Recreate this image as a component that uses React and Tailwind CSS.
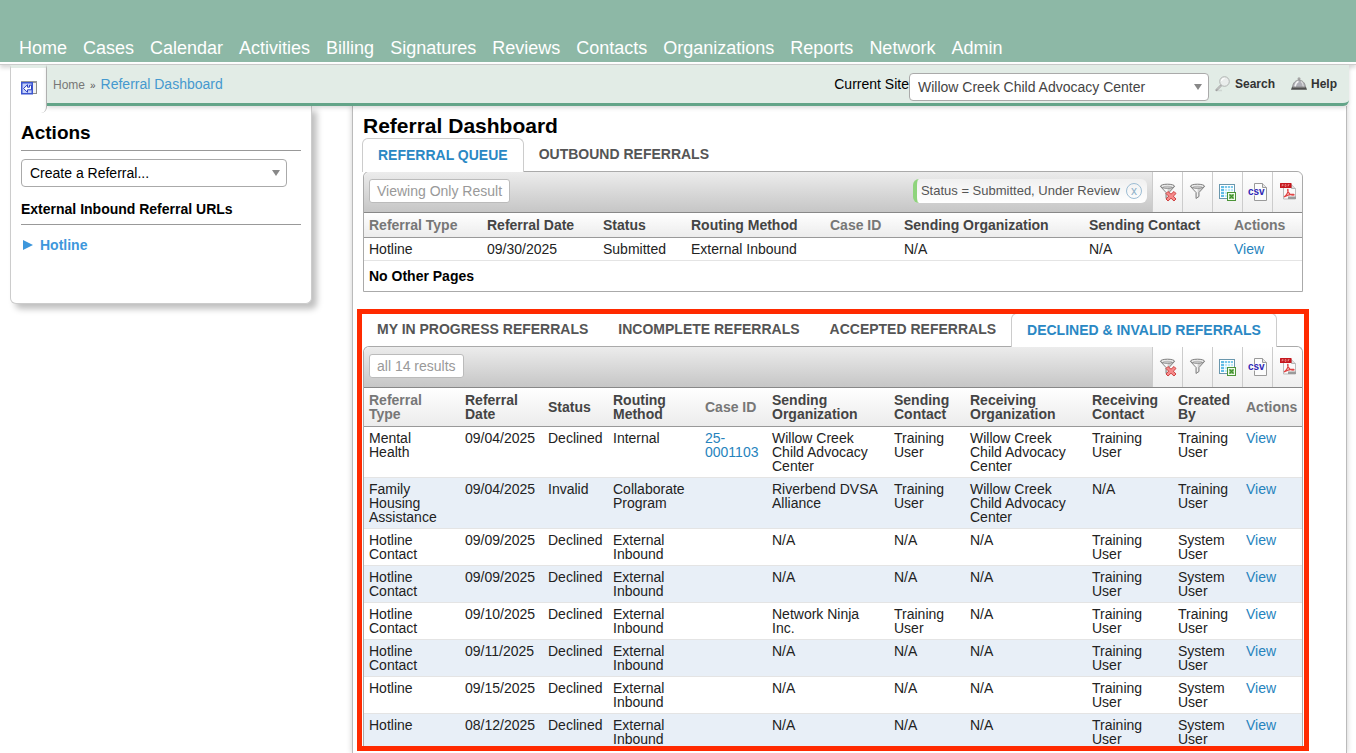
import { useState } from 'react';

const navItems = [
  'Home', 'Cases', 'Calendar', 'Activities', 'Billing', 'Signatures',
  'Reviews', 'Contacts', 'Organizations', 'Reports', 'Network', 'Admin',
];

const queueColumns = [
  { label: 'Referral Type', width: 118, muted: true },
  { label: 'Referral Date', width: 116 },
  { label: 'Status', width: 88 },
  { label: 'Routing Method', width: 139 },
  { label: 'Case ID', width: 74, muted: true },
  { label: 'Sending Organization', width: 185 },
  { label: 'Sending Contact', width: 145 },
  { label: 'Actions', width: 73, muted: true },
];

const queueRows = [
  ['Hotline', '09/30/2025', 'Submitted', 'External Inbound', '', 'N/A', 'N/A'],
];

const declinedColumns = [
  { label: 'Referral Type', width: 96, muted: true },
  { label: 'Referral Date', width: 83 },
  { label: 'Status', width: 65 },
  { label: 'Routing Method', width: 92 },
  { label: 'Case ID', width: 67, muted: true, link: true },
  { label: 'Sending Organization', width: 122 },
  { label: 'Sending Contact', width: 76 },
  { label: 'Receiving Organization', width: 122 },
  { label: 'Receiving Contact', width: 86 },
  { label: 'Created By', width: 68 },
  { label: 'Actions', width: 61, muted: true },
];

const declinedRows = [
  ['Mental Health', '09/04/2025', 'Declined', 'Internal', '25-0001103', 'Willow Creek Child Advocacy Center', 'Training User', 'Willow Creek Child Advocacy Center', 'Training User', 'Training User'],
  ['Family Housing Assistance', '09/04/2025', 'Invalid', 'Collaborate Program', '', 'Riverbend DVSA Alliance', 'Training User', 'Willow Creek Child Advocacy Center', 'N/A', 'Training User'],
  ['Hotline Contact', '09/09/2025', 'Declined', 'External Inbound', '', 'N/A', 'N/A', 'N/A', 'Training User', 'System User'],
  ['Hotline Contact', '09/09/2025', 'Declined', 'External Inbound', '', 'N/A', 'N/A', 'N/A', 'Training User', 'System User'],
  ['Hotline Contact', '09/10/2025', 'Declined', 'External Inbound', '', 'Network Ninja Inc.', 'Training User', 'N/A', 'Training User', 'Training User'],
  ['Hotline Contact', '09/11/2025', 'Declined', 'External Inbound', '', 'N/A', 'N/A', 'N/A', 'Training User', 'System User'],
  ['Hotline', '09/15/2025', 'Declined', 'External Inbound', '', 'N/A', 'N/A', 'N/A', 'Training User', 'System User'],
  ['Hotline', '08/12/2025', 'Declined', 'External Inbound', '', 'N/A', 'N/A', 'N/A', 'Training User', 'System User'],
];

function FunnelShape() {
  return (
    <>
      <path d="M2.5 4.5 L8 10.5 V16.5 L11 14.5 V10.5 L16.5 4.5 Z" fill="#cfcfcf" stroke="#858585" strokeWidth="1" strokeLinejoin="round" />
      <path d="M5 6.5h4.500L10 14.500H9V10.500z" fill="#f7f7f7" />
      <ellipse cx="9.5" cy="4.2" rx="7" ry="2" fill="#ededed" stroke="#7d7d7d" />
      <ellipse cx="9.5" cy="4.6" rx="4.5" ry="0.9" fill="#bdbdbd" />
    </>
  );
}

function ClearFilterIcon() {
  return (
    <svg width="20" height="20" viewBox="0 0 20 20">
      <FunnelShape />
      <path d="M8 11.5 L10 9.5 L13 12.2 L16 9.5 L18 11.5 L15.3 14.2 L18 17 L16 19 L13 16.2 L10 19 L8 17 L10.700 14.2 Z" fill="#f58a8a" stroke="#cf4343" strokeWidth="1" />
    </svg>
  );
}

function FilterIcon() {
  return (
    <svg width="20" height="20" viewBox="0 0 20 20">
      <FunnelShape />
    </svg>
  );
}

function ExcelIcon() {
  return (
    <svg width="20" height="20" viewBox="0 0 20 20">
      <rect x="1.5" y="2.5" width="15" height="14" fill="#fff" stroke="#6a97ad" />
      <rect x="3" y="4" width="12" height="2" fill="#7cc8ea" />
      <rect x="3" y="4" width="3" height="11" fill="#62bce6" />
      <rect x="6" y="6" width="9" height="9" fill="#bfe9f8" />
      <path d="M3 6.5h12M3 9.5h12M3 12.5h12M6.500 4v11M9.5 4v11M12.500 4v11" stroke="#fff" strokeWidth="0.8" />
      <rect x="9.5" y="10.5" width="8" height="8" fill="#f3fbee" stroke="#4c9438" />
      <rect x="11" y="12" width="5" height="5" fill="#a8d596" />
      <path d="M11.500 12.500l4 4M15.500 12.500l-4 4" stroke="#3f8f2d" strokeWidth="1.3" />
    </svg>
  );
}

function CsvIcon() {
  return (
    <svg width="20" height="20" viewBox="0 0 20 20">
      <path d="M6.500 1.5h8l4 4v13h-12z" fill="#fcfcfc" stroke="#9a9a9a" />
      <path d="M14.5 1.5v4h4" fill="#e4e4e4" stroke="#9a9a9a" />
      <rect x="1" y="7.500" width="15.500" height="6" fill="#fafafa" />
      <text x="0" y="13" fontSize="10" fontWeight="bold" fontFamily="Liberation Sans, sans-serif" fill="#2f27b5">csv</text>
    </svg>
  );
}

function PdfIcon() {
  return (
    <svg width="20" height="20" viewBox="0 0 20 20">
      <path d="M5.500 2.5h8l4 4v10.500h-12z" fill="#fafafa" stroke="#bcbcbc" />
      <path d="M13.500 2.500v4h4" fill="#ddd" stroke="#b5b5b5" />
      <rect x="2" y="1" width="11.500" height="5" rx="0.5" fill="#c5161d" />
      <path d="M4 4.500V2.500h1.200v1H4M7 4.500v-2h1v2zM10 4.500v-2h1.500M10 3.500h1" fill="none" stroke="#f0a0a0" strokeWidth="0.6" />
      <path d="M6 15C9 13 10.500 9.500 10 7.500C9.600 6.800 9.300 8.300 10.200 10C11.200 12 13.500 13.300 16 13C16.500 12 12.500 11.500 6 15" fill="none" stroke="#e04545" strokeWidth="1.2" />
      <rect x="10" y="14.500" width="8" height="2.500" fill="#9a9a9a" />
    </svg>
  );
}

function CollapseIcon() {
  return (
    <svg width="16" height="14" viewBox="0 0 16 14">
      <rect x="0.5" y="0.5" width="15" height="12" fill="#f2f2f2" stroke="#8d8d8d" />
      <rect x="0" y="0" width="16" height="2" fill="#999" />
      <rect x="0.75" y="1.75" width="10.500" height="11" fill="#c6d2fa" stroke="#3c55d0" strokeWidth="1.500" />
      <path d="M2.500 7.500l4-3.800v2.500h2V4.200h2v4.600h-4v2.500z" fill="#fff" stroke="#2b3fc0" strokeWidth="1" />
    </svg>
  );
}

function SearchIcon() {
  return (
    <svg width="16" height="16" viewBox="0 0 16 16">
      <path d="M1 14.500h6" stroke="#cfd6d2" strokeWidth="1.500" />
      <path d="M1.500 14L6 9.500" stroke="#9f9f9f" strokeWidth="2.200" strokeLinecap="round" />
      <path d="M2 13.500L6 9.500" stroke="#e8e8e8" strokeWidth="0.8" />
      <circle cx="9.500" cy="5.500" r="4.800" fill="#eaedec" stroke="#b0b4b2" />
      <path d="M6.500 5a3 3 0 0 1 3-2.500" fill="none" stroke="#fff" strokeWidth="1.200" />
    </svg>
  );
}

function BellIcon() {
  return (
    <svg width="16" height="16" viewBox="0 0 16 16">
      <circle cx="8" cy="2.800" r="1.500" fill="#a5a5a5" />
      <path d="M1.500 11C2 6.500 4.800 4.200 8 4.200s6 2.300 6.500 6.800z" fill="#aeaeb6" stroke="#8a8a8a" strokeWidth="0.8" />
      <path d="M4 10.500C4.500 8 5.500 6 7.500 5.200" stroke="#f2f2f2" strokeWidth="1.500" fill="none" />
      <path d="M10 5.500c1.500 1 2.200 3 2.300 5" stroke="#dcdcdc" strokeWidth="1.200" fill="none" />
      <path d="M1 11h14l1 2.800H0z" fill="#4f4f4f" />
      <path d="M1.500 11.300h13" stroke="#909090" strokeWidth="0.8" />
    </svg>
  );
}

function SelectBox({ id, className, children }) {
  return (
    <div className={`relative ${className}`}>
      <select id={id} className="block h-7 w-full appearance-none rounded border border-[#aaa] bg-white pr-6 pl-2 text-sm">
        {children}
      </select>
      <svg className="pointer-events-none absolute top-[11px] right-[7px]" width="8" height="6" viewBox="0 0 8 6">
        <path d="M0 0h8L4 6z" fill="#888" />
      </svg>
    </div>
  );
}

function Tabs({ items, initial }) {
  const [active, setActive] = useState(initial);

  return (
    <div role="tablist" className="relative z-10 -mb-px -ml-px flex h-[34px]">
      {items.map((item) => (
        <button
          key={item}
          type="button"
          role="tab"
          aria-selected={item === active}
          onClick={() => setActive(item)}
          className={
            item === active
              ? 'rounded-t-md border border-b-0 border-[#ccc] bg-white px-[15px] pb-[2px] text-sm font-bold text-[#2a88c4]'
              : 'px-[15px] pb-[3px] text-sm font-bold text-[#555]'
          }
        >
          {item}
        </button>
      ))}
    </div>
  );
}

function ToolButton({ label, children }) {
  return (
    <button type="button" aria-label={label} className="flex h-full w-[30px] items-center justify-center border-l border-[#ccc] bg-linear-to-b from-white to-[#efefef]">
      {children}
    </button>
  );
}

function Toolbar({ result, filter }) {
  return (
    <div className="flex h-[41px] items-center overflow-hidden rounded-t-md border-b border-[#888] bg-linear-to-b from-[#ececec] to-[#c6c6c6] pl-[5px]">
      <button type="button" className="mb-[2px] h-6 rounded-[3px] border border-[#bbb] bg-white px-[7px] text-sm text-[#999]">
        {result}
      </button>
      <div className="ml-auto flex h-full items-center">
        {filter && (
          <div className="mr-[5px] mb-[2px] flex h-6 items-center gap-[6px] rounded-md border-l-4 border-[#8fd47c] bg-linear-to-b from-[#f0f0f0] to-white pr-[5px] pl-1 text-[13px] text-[#555]">
            <span>{filter}</span>
            <button type="button" aria-label="Remove filter" className="flex size-4 items-center justify-center rounded-full border border-[#9dbdd4] text-xs text-[#8fb0c8]">
              x
            </button>
          </div>
        )}
        <ToolButton label="Clear filter"><ClearFilterIcon /></ToolButton>
        <ToolButton label="Filter"><FilterIcon /></ToolButton>
        <ToolButton label="Export to Excel"><ExcelIcon /></ToolButton>
        <ToolButton label="Export to CSV"><CsvIcon /></ToolButton>
        <ToolButton label="Export to PDF"><PdfIcon /></ToolButton>
      </div>
    </div>
  );
}

function ReferralTable({ columns, rows }) {
  return (
    <table className="w-full table-fixed border-collapse text-left text-sm/[14px] text-[#222]">
      <colgroup>
        {columns.map((col) => (
          <col key={col.label} style={{ width: col.width }} />
        ))}
      </colgroup>
      <thead>
        <tr className="border-b border-[#999] bg-linear-to-b from-white to-[#ececec]">
          {columns.map((col) => (
            <th key={col.label} className={`py-[5px] pr-1 pl-[5px] ${col.muted ? 'text-[#777]' : 'text-[#444]'}`}>
              {col.label}
            </th>
          ))}
        </tr>
      </thead>
      <tbody>
        {rows.map((row, i) => (
          <tr key={i} className="border-b border-[#e4e4e4] even:bg-[#e8eff7]">
            {row.map((cell, j) => (
              <td key={j} className="py-1 pr-[5px] pl-[5px] align-top">
                {columns[j].link && cell ? <a href="#case" className="text-[#2683bd]">{cell}</a> : cell}
              </td>
            ))}
            <td className="py-1 pl-[5px] align-top">
              <a href="#view" className="text-[#2683bd]">View</a>
            </td>
          </tr>
        ))}
      </tbody>
    </table>
  );
}

export default function App() {
  return (
    <div className="flex min-h-screen flex-col bg-white font-['Liberation_Sans',Arial,sans-serif] text-black">
      <header className="border-b border-[#ccc] bg-white pb-[2px] shadow-[0_3px_4px_rgba(0,0,0,0.15)]">
        <nav className="flex h-[62px] items-end gap-4 bg-[#8db8a6] pl-[19px] text-lg text-white">
          {navItems.map((item) => (
            <a key={item} href="#nav">{item}</a>
          ))}
        </nav>
      </header>

      <div className="relative z-20 mr-[7px] ml-[10px] flex h-[41px]">
        <button type="button" aria-label="Collapse sidebar" className="flex h-12 w-[37px] shrink-0 items-center justify-center rounded-br-md border-t-3 border-r border-l border-t-[#e2ece6] border-r-[#bbb] border-l-[#ccc] bg-white pb-[6px]">
          <CollapseIcon />
        </button>
        <div className="flex flex-1 items-center rounded-br-md border-b-3 border-[#63a488] bg-[#e2ece6] pr-3 pl-[6px] shadow-[0_2px_4px_rgba(0,0,0,0.15)]">
          <div className="flex items-baseline gap-[5px]">
            <a href="#home" className="text-xs text-[#777]">Home</a>
            <span className="text-[10px] text-[#555]">»</span>
            <a href="#dashboard" className="text-sm text-[#4599cf]">Referral Dashboard</a>
          </div>
          <label htmlFor="site" className="ml-auto text-sm">Current Site</label>
          <SelectBox id="site" className="mt-[6px] w-[300px] text-[#444]">
            <option>Willow Creek Child Advocacy Center</option>
          </SelectBox>
          <a href="#search" className="ml-[6px] flex items-center gap-1 text-xs font-bold text-[#333]">
            <SearchIcon />
            Search
          </a>
          <a href="#help" className="ml-4 flex items-center gap-1 text-xs font-bold text-[#333]">
            <BellIcon />
            Help
          </a>
        </div>
      </div>

      <div className="mr-[9px] ml-[10px] flex flex-1 gap-10">
        <aside className="h-[198px] w-[302px] shrink-0 rounded-b-md border border-t-0 border-[#ccc] bg-white px-[10px] pt-[15px] shadow-[5px_5px_6px_rgba(0,0,0,0.25)]">
          <h2 className="border-b border-[#999] pb-[5px] text-[19px]/6 font-bold">
            <label htmlFor="create">Actions</label>
          </h2>
          <SelectBox id="create" className="mt-2 w-[266px]">
            <option>Create a Referral...</option>
          </SelectBox>
          <h3 className="mt-3 border-b border-[#999] pb-[5px] text-sm font-bold">External Inbound Referral URLs</h3>
          <button type="button" className="mt-[10px] flex items-center gap-[7px] pl-[2px] text-sm font-bold text-[#3d97dc]">
            <svg width="10" height="10" viewBox="0 0 10 10">
              <path d="M0 0l10 5L0 10z" fill="currentColor" />
            </svg>
            Hotline
          </button>
        </aside>

        <main className="flex-1 border-x border-[#bbb] bg-white pt-2 pr-[43px] pl-[10px] shadow-[0_0_6px_rgba(0,0,0,0.2)]">
          <h1 className="text-[21px]/6 font-bold">Referral Dashboard</h1>

          <section>
            <Tabs items={['REFERRAL QUEUE', 'OUTBOUND REFERRALS']} initial="REFERRAL QUEUE" />
            <div className="rounded-t-md border border-[#aaa]">
              <Toolbar result="Viewing Only Result" filter="Status = Submitted, Under Review" />
              <ReferralTable columns={queueColumns} rows={queueRows} />
              <p className="pl-[5px] text-sm/[30px] font-bold">No Other Pages</p>
            </div>
          </section>

          <section className="relative mt-[21px]">
            <Tabs
              items={['MY IN PROGRESS REFERRALS', 'INCOMPLETE REFERRALS', 'ACCEPTED REFERRALS', 'DECLINED & INVALID REFERRALS']}
              initial="DECLINED & INVALID REFERRALS"
            />
            <div className="rounded-t-md border border-b-0 border-[#aaa]">
              <Toolbar result="all 14 results" />
              <ReferralTable columns={declinedColumns} rows={declinedRows} />
            </div>
            {/* red highlight around the section */}
            <div className="pointer-events-none absolute -inset-x-[6px] -top-1 bottom-0 z-20 border-5 border-[#ff2a00]" />
          </section>
        </main>
      </div>
    </div>
  );
}
